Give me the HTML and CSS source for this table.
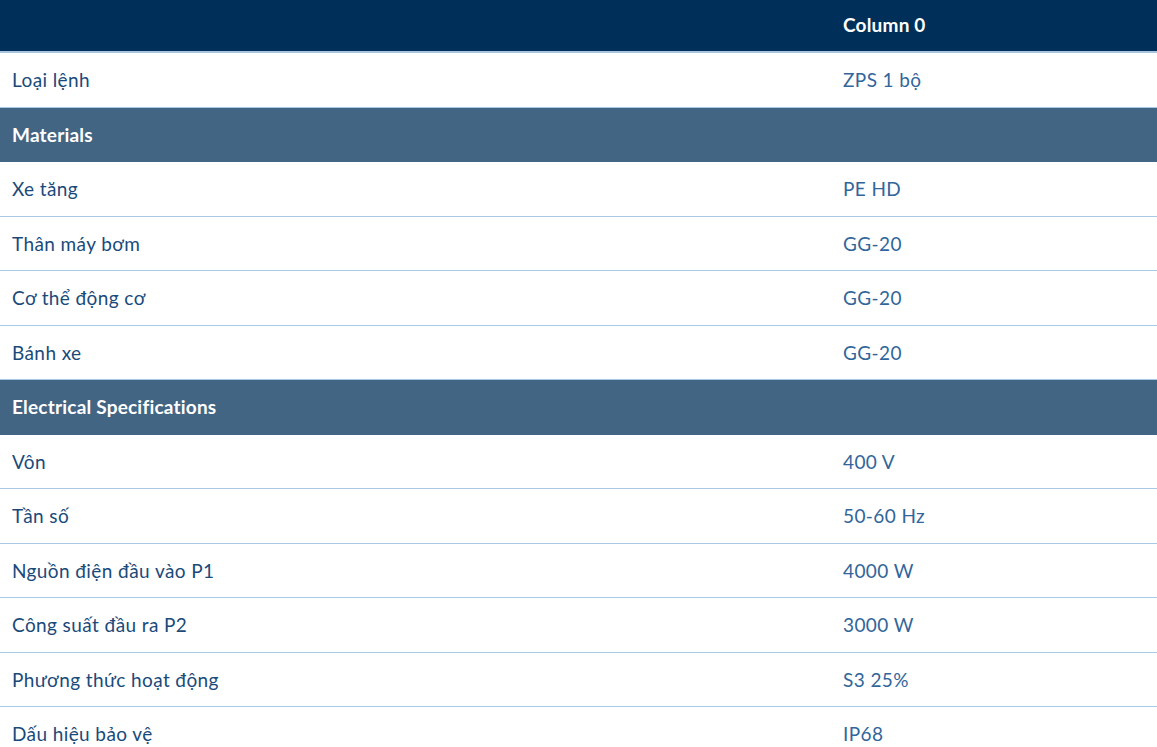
FILE: index.html
```html
<!DOCTYPE html>
<html lang="vi">
<head>
<meta charset="utf-8">
<title>Specifications</title>
<link rel="stylesheet" href="styles.css">
</head>
<body>
<table class="spec">
  <thead>
    <tr class="head"><th class="label"></th><th class="value">Column 0</th></tr>
  </thead>
  <tbody>
    <tr><td class="label">Loại lệnh</td><td class="value">ZPS 1 bộ</td></tr>
    <tr class="section"><td class="label">Materials</td><td class="value"></td></tr>
    <tr><td class="label">Xe tăng</td><td class="value">PE HD</td></tr>
    <tr><td class="label">Thân máy bơm</td><td class="value">GG-20</td></tr>
    <tr><td class="label">Cơ thể động cơ</td><td class="value">GG-20</td></tr>
    <tr><td class="label">Bánh xe</td><td class="value">GG-20</td></tr>
    <tr class="section"><td class="label">Electrical Specifications</td><td class="value"></td></tr>
    <tr><td class="label">Vôn</td><td class="value">400 V</td></tr>
    <tr><td class="label">Tần số</td><td class="value">50-60 Hz</td></tr>
    <tr><td class="label">Nguồn điện đầu vào P1</td><td class="value">4000 W</td></tr>
    <tr><td class="label">Công suất đầu ra P2</td><td class="value">3000 W</td></tr>
    <tr><td class="label">Phương thức hoạt động</td><td class="value">S3 25%</td></tr>
    <tr><td class="label">Dấu hiệu bảo vệ</td><td class="value">IP68</td></tr>
  </tbody>
</table>
</body>
</html>
```
FILE: styles.css
```css
html, body {
  margin: 0;
  padding: 0;
  background: #ffffff;
}
body {
  font-family: "Lato", "Open Sans", "Liberation Sans", sans-serif;
  font-size: 19px;
  color: #1a4a7a;
}
.spec {
  width: 100%;
  border-collapse: collapse;
  border-spacing: 0;
}
.spec th, .spec td {
  text-align: left;
  padding: 13.25px 12px;
  line-height: 27px;
  vertical-align: middle;
  letter-spacing: 0.4px;
}
.spec .label {
  width: 807px;
  font-weight: 400;
}
.spec .value {
  font-weight: 400;
  color: #31669a;
}
.spec .head th {
  background: #00305a;
  color: #ffffff;
  font-weight: 700;
  letter-spacing: 0.2px;
  padding: 11px 12px 13px;
  border-bottom: 2px solid #a7c4de;
}
.spec tbody tr {
  border-bottom: 1px solid #a9c8e6;
}
.spec tbody tr.section {
  background: #436584;
  border-bottom-color: #436584;
}
.spec .section td {
  color: #ffffff;
  font-weight: 700;
  letter-spacing: 0.2px;
}
```
